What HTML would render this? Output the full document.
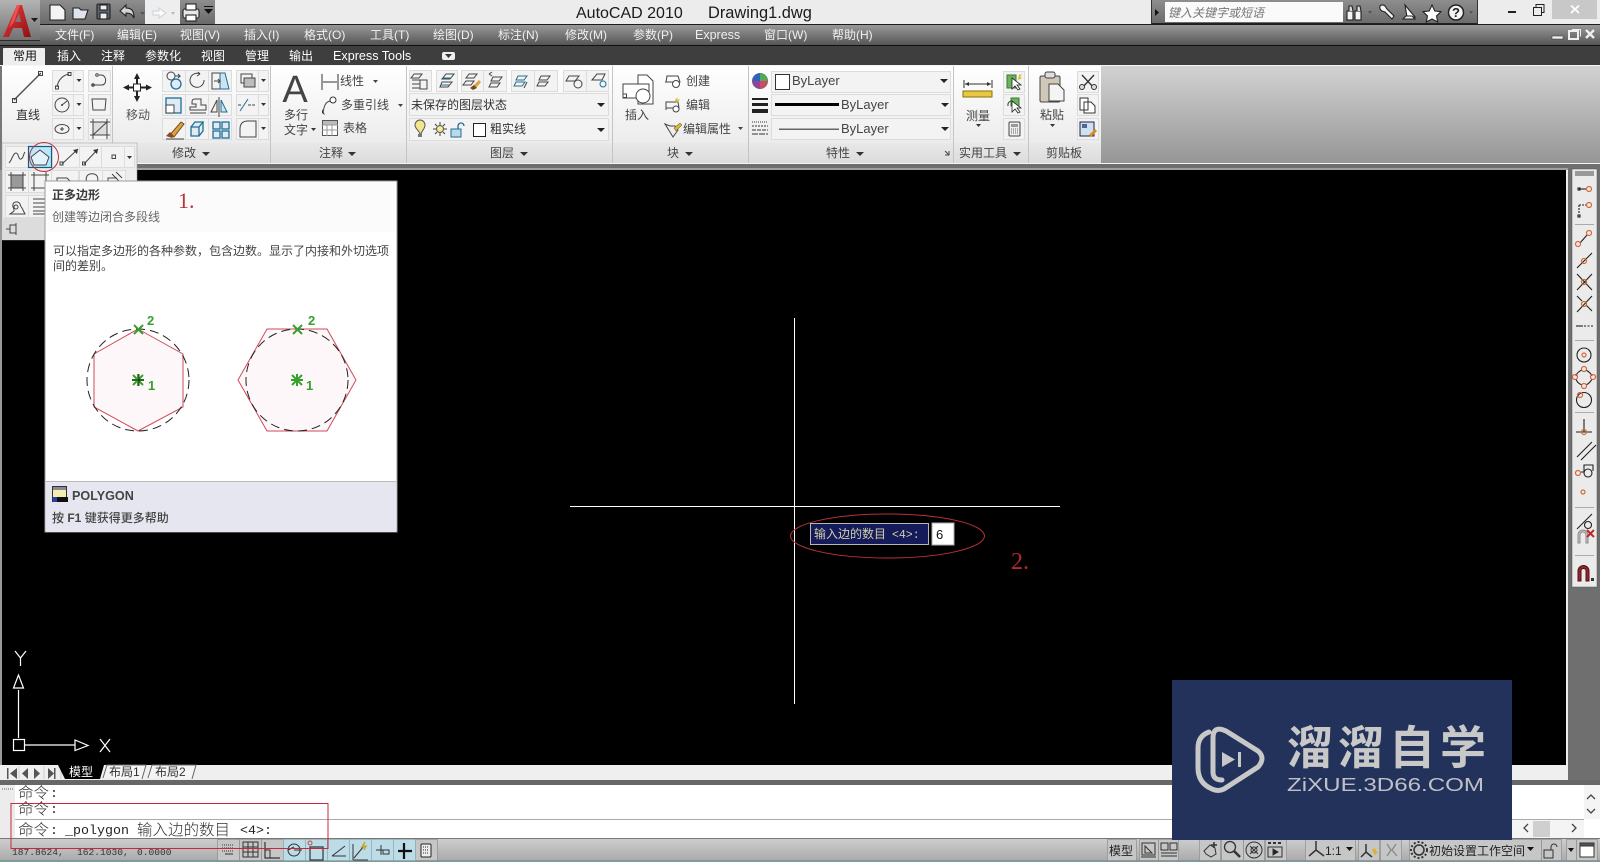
<!DOCTYPE html>
<html><head><meta charset="utf-8"><title>AutoCAD 2010</title>
<style>
html,body{margin:0;padding:0;width:1600px;height:862px;overflow:hidden;background:#000}
svg{display:block;position:absolute;left:0;top:0}
text{font-family:"Liberation Sans","Noto Sans CJK SC",sans-serif;font-size:12px;fill:#333}
.m{fill:#f0f0f0;font-size:12px}
.t{fill:#fff;font-size:12px}
.c{text-anchor:middle}
.b{fill:#f3f3f3;stroke:#dcdcdc;stroke-width:1}
.i{fill:none;stroke:#444;stroke-width:1.2}
.o{fill:none;stroke:#444;stroke-width:1}
.blue{fill:#dfeaf3;stroke:#1c6f97;stroke-width:1.3}
.cm{font-family:"Noto Sans CJK SC",sans-serif;font-size:15.5px;fill:#333;font-weight:300}
.cl{font-family:"Liberation Mono",monospace;font-size:13.3px;fill:#222}
.sb{fill:#bcdce8;stroke:#8aa;stroke-width:.6}
.sn{fill:#c6c6c6;stroke:#888;stroke-width:.6}
.snap{fill:none;stroke:#222;stroke-width:1.1}
.r{fill:none;stroke:#d2693a;stroke-width:1.2}
.red{fill:none;stroke:#b8323a;stroke-width:1}
</style></head><body>
<svg width="1600" height="862" viewBox="0 0 1600 862" xmlns="http://www.w3.org/2000/svg">
<defs>
<linearGradient id="gm" x1="0" y1="0" x2="0" y2="1"><stop offset="0" stop-color="#9c9c9c"/><stop offset="1" stop-color="#525252"/></linearGradient>
<linearGradient id="gq" x1="0" y1="0" x2="0" y2="1"><stop offset="0" stop-color="#8e8e8e"/><stop offset="1" stop-color="#6a6a6a"/></linearGradient>
<linearGradient id="gr" x1="0" y1="0" x2="0" y2="1"><stop offset="0" stop-color="#ffffff"/><stop offset="1" stop-color="#ececec"/></linearGradient>
<linearGradient id="gt" x1="0" y1="0" x2="0" y2="1"><stop offset="0" stop-color="#e8e8e8"/><stop offset="1" stop-color="#dcdcdc"/></linearGradient>
<linearGradient id="ge" x1="0" y1="0" x2="0" y2="1"><stop offset="0" stop-color="#d2d2d2"/><stop offset="1" stop-color="#969696"/></linearGradient>
<linearGradient id="gs" x1="0" y1="0" x2="0" y2="1"><stop offset="0" stop-color="#cfcfcf"/><stop offset="1" stop-color="#a8a8a8"/></linearGradient>
<linearGradient id="ga" x1="0" y1="0" x2="0" y2="1"><stop offset="0" stop-color="#b4b4b4"/><stop offset="1" stop-color="#707070"/></linearGradient>
<linearGradient id="gl" x1="0" y1="0" x2="1" y2="1"><stop offset="0" stop-color="#e84040"/><stop offset="1" stop-color="#8e1014"/></linearGradient>
</defs>

<!-- title bar -->
<rect width="1600" height="24" fill="#ececec"/>
<rect x="0" y="24" width="1600" height="22" fill="url(#gm)"/>
<rect x="0" y="24" width="1600" height="1" fill="#1c1c1c"/>
<rect x="0" y="45" width="1600" height="1" fill="#111"/>
<rect x="0" y="46" width="1600" height="19" fill="#3e3e3e"/>

<!-- QAT -->
<rect x="40" y="0" width="175" height="24" fill="url(#gq)"/>
<rect x="145" y="0" width="35" height="24" fill="#eeeeee"/>
<g stroke="#222" stroke-width="1.1">
<path d="M50 5h10l5 5v10H50z" fill="#f4f4f4"/>
<path d="M73 8h6l2 2h7l-3 9H73z" fill="#dfe5ea"/>
<rect x="97" y="4" width="13" height="15" rx="1" fill="#5c6670"/><rect x="100" y="5" width="7" height="5" fill="#eee"/><rect x="100" y="13" width="7" height="6" fill="#eee"/>
<path d="M120 11l6-6v3c6 0 8 3 8 10-2-4-4-5-8-5v3z" fill="#d4d4d4"/>
</g>
<path d="M153 11l6 0v-3l7 5-7 5v-3h-6z" fill="#fafafa" stroke="#c8d2dc" stroke-width="1"/>
<g stroke="#222" stroke-width="1.1" fill="#e8e8e8">
<rect x="183" y="9" width="16" height="9" rx="2"/><rect x="186" y="4" width="10" height="6" fill="#fff"/><rect x="186" y="15" width="10" height="6" fill="#fff"/>
</g>
<path d="M204 9h9l-4.500 5z M204 6h9v1h-9z" fill="#111"/>
<path d="M140 12h5l-2.500 3z" fill="#555"/><path d="M171 12h4l-2 3z" fill="#bbb"/>

<!-- App button -->
<rect x="0" y="0" width="40" height="41" fill="url(#ga)"/>
<rect x="0" y="40" width="40" height="1" fill="#2a2a2a"/>
<path d="M3 37L17 5h5l9 32h-7l-2-9h-9l-4 9z" fill="url(#gl)"/>
<path d="M15 22h6l-2-9z" fill="#8a7070"/>
<path d="M17 5h3l-6 17-5 6z" fill="#f05050"/>
<path d="M31 18h7l-3.500 4z" fill="#1a1a1a"/>

<!-- Title -->
<text x="576" y="18" style="font-size:16px;fill:#1b1b1b">AutoCAD 2010</text>
<text x="708" y="18" style="font-size:16.4px;fill:#1b1b1b">Drawing1.dwg</text>

<!-- Search -->
<rect x="1151" y="0" width="327" height="24" fill="url(#gq)"/>
<rect x="1151" y="23" width="327" height="1" fill="#222"/>
<rect x="1151" y="0" width="1" height="24" fill="#333"/>
<rect x="1477" y="0" width="1" height="24" fill="#333"/>
<rect x="1165" y="2" width="178" height="20" fill="#fafafa"/>
<path d="M1155 9l4 3.500-4 3.500z" fill="#111"/>
<text x="1168" y="17" style="font-size:12px;font-style:italic;fill:#777">键入关键字或短语</text>
<g stroke="#222" stroke-width="1.1" fill="#f4f4f4">
<rect x="1347" y="11" width="6" height="9"/><rect x="1355" y="11" width="6" height="9"/><path d="M1349 11v-5h3l1 5M1357 11v-5h3l1 5" fill="#ddd"/>
<path d="M1380 6a3.500 3.500 0 0 1 5 0l2 3 7 7-2 3-7-7-3-1a4 4 0 0 1-2-5z"/>
<path d="M1405 5l10 12h-8z" fill="#fff"/><path d="M1403 19h12l-3-3h-6z"/>
<path d="M1432 5l2.800 6 6.200.7-4.500 4.300 1.200 6-5.700-3-5.700 3 1.200-6-4.500-4.300 6.200-.7z" fill="#fff"/>
<circle cx="1456" cy="12.500" r="7.500" stroke-width="1.500"/>
</g>
<text x="1456" y="17" class="c" style="font-size:13px;font-weight:bold;fill:#222">?</text>
<path d="M1368 11h4l-2 3zM1469 11h4l-2 3z" fill="#555"/>

<!-- window controls -->
<rect x="1508" y="11" width="8" height="2" fill="#222"/>
<path d="M1533.500 7.500h8v8h-8zM1536 7v-2.500h8v8h-2.500" fill="none" stroke="#222" stroke-width="1"/>
<rect x="1552" y="0" width="45" height="19" fill="#c8c8c8"/>
<path d="M1571 5.500l8 7.500M1579 5.500l-8 7.500" stroke="#fff" stroke-width="1.800"/>
<!-- menu right -->
<rect x="1552" y="36" width="11" height="3" fill="#eee" stroke="#333" stroke-width=".5"/>
<rect x="1569" y="31" width="9" height="8" fill="none" stroke="#eee" stroke-width="2"/>
<path d="M1572 29.500h8.500v7" fill="none" stroke="#eee" stroke-width="1"/>
<path d="M1586 30l8 8M1594 30l-8 8" stroke="#eee" stroke-width="2.400"/>

<!-- Menu -->
<text x="55" y="39" class="m">文件(F)</text>
<text x="117" y="39" class="m">编辑(E)</text>
<text x="180" y="39" class="m">视图(V)</text>
<text x="244" y="39" class="m">插入(I)</text>
<text x="304" y="39" class="m">格式(O)</text>
<text x="370" y="39" class="m">工具(T)</text>
<text x="433" y="39" class="m">绘图(D)</text>
<text x="498" y="39" class="m">标注(N)</text>
<text x="565" y="39" class="m">修改(M)</text>
<text x="633" y="39" class="m">参数(P)</text>
<text x="695" y="39" class="m" style="font-size:12.5px">Express</text>
<text x="764" y="39" class="m">窗口(W)</text>
<text x="832" y="39" class="m">帮助(H)</text>

<!-- Tabs -->
<path d="M3 65V49q0-1 1-1h40q1 0 1 1v16z" fill="#eeeeee"/>
<text x="13" y="60" style="font-size:12px;fill:#111">常用</text>
<text x="57" y="60" class="t">插入</text>
<text x="101" y="60" class="t">注释</text>
<text x="145" y="60" class="t">参数化</text>
<text x="201" y="60" class="t">视图</text>
<text x="245" y="60" class="t">管理</text>
<text x="289" y="60" class="t">输出</text>
<text x="333" y="60" class="t" style="font-size:12.6px">Express Tools</text>
<rect x="442" y="52" width="13" height="8" rx="2" fill="#eee"/><path d="M445 54h7l-3.500 4z" fill="#333"/>

<!-- Ribbon -->
<rect x="0" y="65" width="1600" height="1" fill="#f5f5f5"/>
<rect x="1101" y="66" width="499" height="97" fill="url(#ge)"/>
<rect x="2" y="66" width="1099" height="77" fill="url(#gr)"/>
<rect x="2" y="143" width="1099" height="20" fill="url(#gt)"/>
<rect x="0" y="163" width="1600" height="1" fill="#f4f4f4"/>
<rect x="0" y="164" width="1600" height="6" fill="#6e6e6e"/>
<rect x="0" y="168" width="1600" height="2" fill="#a0a0a0"/>
<rect x="0" y="66" width="2" height="104" fill="#777"/>
<g fill="#c4c4c4">
<rect x="112" y="66" width="1" height="77"/><rect x="270" y="66" width="1" height="97"/><rect x="406" y="66" width="1" height="97"/>
<rect x="612" y="66" width="1" height="97"/><rect x="748" y="66" width="1" height="97"/><rect x="953" y="66" width="1" height="97"/><rect x="1028" y="66" width="1" height="97"/>
</g>

<!-- Panel titles -->
<g style="font-size:12px">
<text x="172" y="157" style="fill:#444">修改</text><path d="M202 152h8l-4 4z" fill="#333"/>
<text x="319" y="157" style="fill:#444">注释</text><path d="M348 152h8l-4 4z" fill="#333"/>
<text x="490" y="157" style="fill:#444">图层</text><path d="M520 152h8l-4 4z" fill="#333"/>
<text x="667" y="157" style="fill:#444">块</text><path d="M685 152h8l-4 4z" fill="#333"/>
<text x="826" y="157" style="fill:#444">特性</text><path d="M856 152h8l-4 4z" fill="#333"/>
<text x="959" y="157" style="fill:#444">实用工具</text><path d="M1013 152h8l-4 4z" fill="#333"/>
<text x="1046" y="157" style="fill:#444">剪贴板</text>
<path d="M945 151l4 4M949 151v4h-4" stroke="#444" fill="none"/>
</g>

<!-- draw panel -->
<path d="M14 100L41 73" stroke="#555" stroke-width="1.500"/>
<rect x="12.500" y="98.500" width="4" height="4" class="o"/><rect x="38.500" y="71.500" width="4" height="4" class="o"/>
<text x="28" y="119" class="c" style="font-size:12px;fill:#333">直线</text>
<g class="b">
<rect x="52.500" y="70.500" width="21" height="21"/><rect x="73.500" y="70.500" width="10" height="21"/>
<rect x="52.500" y="94.500" width="21" height="21"/><rect x="73.500" y="94.500" width="10" height="21"/>
<rect x="52.500" y="118.500" width="21" height="21"/><rect x="73.500" y="118.500" width="10" height="21"/>
<rect x="88.500" y="70.500" width="22" height="21"/><rect x="88.500" y="94.500" width="22" height="21"/><rect x="88.500" y="118.500" width="22" height="21"/>
</g>
<path d="M76.500 79h5l-2.500 3zM76.500 103h5l-2.500 3zM76.500 127h5l-2.500 3z" fill="#333"/>
<path d="M57 87c1-7 6-12 12-13" class="o"/><rect x="55.500" y="86" width="3" height="3" class="o"/><rect x="68" y="72.500" width="3" height="3" class="o"/>
<circle cx="62" cy="105" r="7" class="o"/><path d="M62 105l5-4" class="o"/><circle cx="62" cy="105" r="1" fill="#444"/>
<ellipse cx="62" cy="129" rx="7" ry="4.500" class="o"/><path d="M60 129h4M62 127v4" class="o"/>
<path d="M92 85h10c5 0 5-10-1-10h-2" class="o"/><circle cx="93" cy="85" r="1.300" class="o"/><circle cx="97" cy="75" r="1.300" class="o"/>
<path d="M92 99h14l-1 11H93z" class="o"/>
<rect x="93" y="122" width="14" height="13" fill="#ddd" stroke="#444"/><path d="M93 119v20M107 119v20M90 122h20M90 135h20M93 135l14-13" class="o"/>

<!-- move -->
<g fill="#222">
<path d="M137 73l3 6h-6zM137 102l3-6h-6zM123 87.500l6-3v6zM152 87.500l-6-3v6z"/>
<rect x="136" y="78" width="2" height="6"/><rect x="136" y="91" width="2" height="6"/><rect x="128" y="86.500" width="6" height="2"/><rect x="140" y="86.500" width="6" height="2"/>
</g><rect x="133.500" y="84" width="7" height="7" fill="#fff" stroke="#222"/>
<text x="138" y="119" class="c" style="font-size:12px;fill:#555">移动</text>

<!-- modify grid -->
<g class="b">
<rect x="162.500" y="70.500" width="23" height="21"/><rect x="185.500" y="70.500" width="23" height="21"/><rect x="208.500" y="70.500" width="23" height="21"/>
<rect x="162.500" y="94.500" width="23" height="21"/><rect x="185.500" y="94.500" width="23" height="21"/><rect x="208.500" y="94.500" width="23" height="21"/>
<rect x="162.500" y="118.500" width="23" height="21"/><rect x="185.500" y="118.500" width="23" height="21"/><rect x="208.500" y="118.500" width="23" height="21"/>
<rect x="236.500" y="70.500" width="22" height="21"/><rect x="258.500" y="70.500" width="10" height="21"/>
<rect x="236.500" y="94.500" width="22" height="21"/><rect x="258.500" y="94.500" width="10" height="21"/>
<rect x="236.500" y="118.500" width="22" height="21"/><rect x="258.500" y="118.500" width="10" height="21"/>
</g>
<path d="M261 79h5l-2.500 3zM261 103h5l-2.500 3zM261 127h5l-2.500 3z" fill="#333"/>
<circle cx="171" cy="76" r="4" class="o"/><circle cx="176" cy="84" r="5" class="blue"/><path d="M175 76h5l-2-2m2 2l-2 2" class="o"/>
<path d="M204 80a7 7 0 1 1-4-6l-2-2m2 2l-3 2" class="o"/>
<rect x="212" y="73" width="11" height="16" class="o"/><path d="M220 73h5l4 16h-9z" fill="#cfe2ef" stroke="#1c6f97"/><path d="M214 81h6l-2-2m2 2l-2 2" class="o"/>
<rect x="166" y="98" width="15" height="15" class="blue"/><rect x="166" y="105" width="8" height="8" fill="#fff" stroke="#444"/>
<path d="M190 110h16v-5h-5v-6h-6q-3 0-3 3v2h4v3h-6z" class="o"/><path d="M190 113h16" class="o"/>
<path d="M219 97v20" class="o"/><path d="M217 100v12h-6z" class="o"/><path d="M221 100v12h6z" fill="#cfe2ef" stroke="#1c6f97"/>
<path d="M169 136l12-14 3 2-10 13z" fill="#d9a441" stroke="#7a4a1a"/><path d="M166 136l4-4 4 4-2 2z" fill="#8b4a22"/><path d="M166 139h18" class="o"/>
<path d="M191 127h8v9h-8zM199 127l4-5h-8l-4 5M199 136l4-5v-9" class="blue"/>
<g class="blue"><rect x="213" y="122" width="7" height="7"/><rect x="222" y="122" width="7" height="7"/><rect x="213" y="131" width="7" height="7"/><rect x="222" y="131" width="7" height="7"/></g>
<rect x="241" y="74" width="11" height="9" class="o"/><rect x="244" y="78" width="11" height="9" fill="#bcbcbc" stroke="#444"/>
<path d="M240 111l8-12" stroke="#1c6f97" fill="none"/><path d="M238 105h4M248 105h8" class="o" stroke-dasharray="3 1"/>
<path d="M240 137v-8q0-8 8-8h8v16z" class="o"/>

<!-- annot -->
<text x="295" y="102" class="c" style="font-size:38px;fill:#444">A</text>
<text x="296" y="119" class="c" style="font-size:12px;fill:#444">多行</text>
<text x="296" y="134" class="c" style="font-size:12px;fill:#444">文字</text>
<path d="M311 128h5l-2.500 3z" fill="#333"/>
<path d="M322 74v16M338 74v16M323 82h14" stroke="#333" fill="none"/>
<text x="340" y="85" style="font-size:12px;fill:#444">线性</text><path d="M373 80h5l-2.500 3z" fill="#444"/>
<path d="M323 113c1-8 3-11 7-12" class="o"/><path d="M322 113l3 2-3-6z" fill="#333"/><circle cx="333" cy="100" r="3" fill="#fff" stroke="#333"/>
<text x="341" y="109" style="font-size:12px;fill:#444">多重引线</text><path d="M398 104h5l-2.500 3z" fill="#444"/>
<rect x="322.500" y="120.500" width="15" height="15" fill="#fff" stroke="#555"/><path d="M322 125h16M322 130h16M327 121v15M332 121v15" stroke="#999" fill="none"/><rect x="323" y="121" width="14" height="3.500" fill="#bbb"/>
<text x="343" y="132" style="font-size:12px;fill:#444">表格</text>

<!-- layers -->
<g class="b">
<rect x="409.500" y="70.500" width="22" height="21"/><rect x="436.500" y="70.500" width="21" height="21"/><rect x="461.500" y="70.500" width="22" height="21"/><rect x="483.500" y="70.500" width="23" height="21"/>
<rect x="511.500" y="70.500" width="23" height="21"/><rect x="534.500" y="70.500" width="23" height="21"/><rect x="563.500" y="70.500" width="23" height="21"/><rect x="586.500" y="70.500" width="22" height="21"/>
<rect x="409.500" y="93.500" width="199" height="22"/><rect x="409.500" y="118.500" width="199" height="22"/>
</g>
<g class="o">
<path d="M414 74h8l-3 4h-8zM412 80h8M412 84h8M412 88h8"/><rect x="420" y="80" width="7" height="9"/>
<path d="M446 74h8l-4 5h-8zM442 82l10 0-4 5h-8z"/><path d="M443 78l8 0M441 85l8 0" stroke="#1c6f97"/>
<path d="M469 74h8l-3 4h-8zM466 81h8l-3 4h-8z"/>
<path d="M493 77h9l-3 4h-8zM491 83h9l-3 4h-8zM489 74l3-2m-3 2l3 2"/>
<path d="M518 76h9l-3 4h-8zM516 82h9l-3 4h-8z" stroke="#2a6f90"/><path d="M527 82l-3 6M541 76h9l-3 4h-8zM539 82h9l-3 4h-8z"/>
<path d="M569 76h10l-4 5h-9z"/><circle cx="578" cy="84" r="4"/><path d="M592 80l5-6h8l-3 6h-10z"/><circle cx="603" cy="84" r="3" stroke="#1c6f97"/>
</g>
<path d="M473 86l6-6 2 2-5 6z" fill="#d9a441"/><path d="M470 88l4-3 3 3-4 2z" fill="#7a4a1a"/>
<text x="411" y="109" style="font-size:12px;fill:#333">未保存的图层状态</text>
<path d="M597 103h8l-4 4zM597 128h8l-4 4z" fill="#222"/>
<path d="M420 134c-1-4-5-5-5-9a5 5 0 0 1 10 0c0 4-3 5-4 9z" fill="#f3e48e" stroke="#555"/><rect x="418" y="134" width="4" height="3" fill="#777"/>
<circle cx="440" cy="129" r="3.500" fill="#f4e98e" stroke="#555"/><path d="M440 122v3M440 133v3M433 129h3M444 129h3M435 124l2 2M443 132l2 2M445 124l-2 2M437 132l-2 2" class="o"/>
<rect x="451" y="129" width="10" height="8" fill="#bcd9ea" stroke="#1c6f97"/><path d="M458 129v-3a3 3 0 0 1 6 0" fill="none" stroke="#1c6f97" stroke-width="1.300"/>
<rect x="473.500" y="123.500" width="12" height="13" fill="#fff" stroke="#222"/>
<text x="490" y="133" style="font-size:12px;fill:#333">粗实线</text>

<!-- block -->
<g class="o" stroke="#555">
<path d="M638 75h9l6 6v23h-15z" fill="#fff"/><rect x="623" y="84" width="26" height="14" fill="#fff"/><circle cx="643" cy="96" r="7" fill="#fff"/><rect x="623" y="94" width="3.500" height="3.500" fill="#fff"/>
<path d="M667 76h11l2 6h-14z M665 82h15"/><circle cx="676" cy="84" r="3.500" fill="#fff"/>
<path d="M666 102h12l1 6h-13zM666 108v2"/><circle cx="676" cy="109" r="3" fill="#fff"/>
<path d="M665 124l5 2 5 0 3 4-5 7z"/>
</g>
<path d="M675 100l3-3-1 3 3-1-3 4z" fill="#d9b820"/><path d="M674 128l6-5 2 2-6 6z" fill="#d9b820" stroke="#444" stroke-width=".5"/>
<text x="637" y="119" class="c" style="font-size:12px;fill:#444">插入</text>
<text x="686" y="85" style="font-size:12px;fill:#444">创建</text>
<text x="686" y="109" style="font-size:12px;fill:#444">编辑</text>
<text x="683" y="133" style="font-size:12px;fill:#444">编辑属性</text>
<path d="M738 127h5l-2.500 3z" fill="#444"/>

<!-- properties -->
<circle cx="760" cy="81" r="7.500" fill="#e0a030" stroke="#666"/>
<path d="M760 81V73.500a7.500 7.500 0 0 1 7.500 7.500z" fill="#4caf50"/><path d="M760 81h7.500a7.500 7.500 0 0 1-7.500 7.500z" fill="#d04a60"/><path d="M760 81v7.500a7.500 7.500 0 0 1-7.500-7.500z" fill="#9040a0"/><path d="M760 81h-7.500a7.500 7.500 0 0 1 7.500-7.500z" fill="#3060c0"/>
<g fill="#222"><rect x="752" y="98" width="16" height="2"/><rect x="752" y="103" width="16" height="3"/><rect x="752" y="109" width="16" height="4"/></g>
<g stroke="#333" fill="none" stroke-width="1"><path d="M752 122h16" stroke-dasharray="1 1"/><path d="M752 126h16" stroke-dasharray="2 1"/><path d="M752 130h16" stroke-dasharray="4 1"/><path d="M752 134h16" stroke-dasharray="6 1"/></g>
<g class="b">
<rect x="771.500" y="71.500" width="179" height="21"/><rect x="771.500" y="94.500" width="179" height="21"/><rect x="771.500" y="118.500" width="179" height="21"/>
</g>
<rect x="775.500" y="74.500" width="14" height="15" fill="#fff" stroke="#333"/>
<text x="792" y="85" style="font-size:13px;fill:#444">ByLayer</text>
<rect x="775" y="103" width="64" height="3" fill="#000"/>
<text x="841" y="109" style="font-size:13px;fill:#444">ByLayer</text>
<rect x="779" y="128.500" width="60" height="1.500" fill="#666"/>
<text x="841" y="133" style="font-size:13px;fill:#444">ByLayer</text>
<path d="M940 79h8l-4 4zM941 103h8l-4 4zM941 127h8l-4 4z" fill="#222"/>

<!-- utils -->
<path d="M964 80v8M992 80v8M965 84h26" stroke="#333" fill="none"/><path d="M965 84l4-2v4zM991 84l-4-2v4z" fill="#333"/>
<rect x="963" y="91" width="29" height="6" fill="#e8c840" stroke="#8a7010"/>
<text x="978" y="120" class="c" style="font-size:12px;fill:#444">测量</text>
<path d="M976 124h5l-2.500 3z" fill="#333"/>
<g class="b"><rect x="1003.500" y="71.500" width="21" height="21"/><rect x="1003.500" y="94.500" width="21" height="21"/><rect x="1003.500" y="118.500" width="21" height="21"/></g>
<rect x="1007" y="75" width="9" height="13" fill="#6eb260" stroke="#3a7a30"/><path d="M1012 78v11l3-3 3 4 2-1-3-4h4z" fill="#fff" stroke="#222" stroke-width=".8"/><path d="M1019 75l3-1-2 3 2 1-4 2z" fill="#d9b820"/>
<path d="M1008 106a4 4 0 0 1 4-5" class="o"/><path d="M1011 98h8v8h-8z" fill="#6eb260" stroke="#3a7a30"/><path d="M1012 101v11l3-3 3 4 2-1-3-4h4z" fill="#fff" stroke="#222" stroke-width=".8"/>
<rect x="1009" y="122" width="11" height="14" rx="1" fill="#eee" stroke="#444"/><rect x="1011" y="124" width="7" height="3" fill="#999"/><path d="M1011 129h7M1011 131h7M1011 133h7" stroke="#666" stroke-dasharray="1 1"/>

<!-- clipboard -->
<rect x="1040" y="76" width="20" height="26" rx="1.500" fill="#cfc7b8" stroke="#444"/><rect x="1045" y="72" width="10" height="6" rx="2" fill="#ddd" stroke="#444"/>
<path d="M1049 84h9l6 6v11h-15z" fill="#f4f4f4" stroke="#444"/>
<text x="1052" y="119" class="c" style="font-size:12px;fill:#444">粘贴</text>
<path d="M1050 124h5l-2.500 3z" fill="#333"/>
<g class="b"><rect x="1077.500" y="71.500" width="21" height="21"/><rect x="1077.500" y="94.500" width="21" height="21"/><rect x="1077.500" y="118.500" width="21" height="21"/></g>
<path d="M1082 75l12 13M1094 75l-12 13" stroke="#333" stroke-width="1.300" fill="none"/><circle cx="1082" cy="87" r="2.500" fill="#ddd" stroke="#333"/><circle cx="1094" cy="87" r="2.500" fill="#ddd" stroke="#333"/>
<path d="M1080 98h8v12h-8z M1084 102h7l4 4v7h-11z" fill="#fff" stroke="#333"/>
<rect x="1080" y="122" width="14" height="14" fill="#cfe0ee" stroke="#224"/><rect x="1082" y="124" width="5" height="4" fill="#4a6a90"/><path d="M1089 135l6-6 2 2-6 6z" fill="#d98a20"/>

<!-- canvas -->
<rect x="2" y="170" width="1564" height="595" fill="#000"/>
<rect x="0" y="170" width="2" height="595" fill="#9a9a9a"/>
<rect x="1566" y="170" width="2" height="600" fill="#eeeeee"/>
<rect x="1568" y="164" width="32" height="621" fill="#6f6f6f"/>

<!-- right toolbar -->
<rect x="1572" y="169" width="25" height="418" fill="#ebebeb" stroke="#555" stroke-width=".5"/>
<rect x="1575" y="171" width="19" height="5" fill="#999"/>
<g stroke="#aaa"><path d="M1575 224.500h19M1575 340.500h19M1575 412.500h19M1575 507.500h19M1575 555.500h19"/></g>
<g class="snap">
<path d="M1579 189h8"/><rect x="1578" y="188" width="2" height="2"/>
<path d="M1579 205h8v0M1579 205v9" stroke-dasharray="2 1"/><rect x="1578" y="215" width="2" height="2"/>
<path d="M1580 243l7-8"/>
<path d="M1577 268l15-15"/>
<path d="M1577 274l15 16M1577 290l15-16"/>
<path d="M1577 296l5 5m4 4l6 6M1577 312l15-16" />
<path d="M1576 326h7"/><path d="M1584 326h10" stroke-dasharray="2 1.500"/>
<circle cx="1584" cy="355" r="7"/>
<path d="M1586 370q5 3 6 6M1592 379q-2 4-6 6M1582 385q-5-2-6-6M1576 376q1-4 6-6"/><circle cx="1584" cy="400" r="7.500"/>
<path d="M1584 419v13M1576 432h16"/>
<path d="M1577 457l15-15M1581 460l15-15"/>
<path d="M1581 472h3v-7h9v6"/><circle cx="1588" cy="473" r="4"/>
<path d="M1577 529l15-15"/><circle cx="1588" cy="525" r="3.500" fill="#ebebeb"/>
</g>
<g class="r">
<circle cx="1589" cy="189" r="2.500"/><circle cx="1589" cy="205" r="2.500"/>
<circle cx="1578" cy="244" r="2.500"/><circle cx="1589" cy="233" r="2.500"/>
<circle cx="1584" cy="261" r="2.500"/><circle cx="1584" cy="282" r="2.500"/><circle cx="1584" cy="304" r="2.500"/>
<circle cx="1584" cy="355" r="2"/><circle cx="1584" cy="369" r="2.500"/><circle cx="1593" cy="377" r="2.500"/><circle cx="1584" cy="386" r="2.500"/><circle cx="1575" cy="377" r="2.500"/>
<circle cx="1580" cy="395" r="2.500"/><circle cx="1584" cy="432" r="2.500"/><circle cx="1578" cy="473" r="2.500"/><circle cx="1583" cy="492" r="2"/>
</g>
<path d="M1578 543v-8a5 5 0 0 1 10 0v8h-2v-8a3 3 0 0 0-6 0v8z" fill="#ccc" stroke="#888"/><path d="M1587 530l7 7M1594 530l-7 7" stroke="#c0282a" stroke-width="2"/>
<path d="M1578 581v-10a5 5 0 0 1 11 0v10h-3v-10a2.500 2.500 0 0 0-5 0v10z" fill="#8a2a2a" stroke="#511"/><rect x="1591" y="578" width="3" height="3" fill="#333"/>

<!-- crosshair -->
<rect x="794" y="318" width="1" height="386" fill="#fff"/>
<rect x="570" y="506" width="490" height="1" fill="#fff"/>
<ellipse cx="887.500" cy="536" rx="97" ry="22" class="red"/>
<rect x="810.500" y="523.500" width="118" height="21" fill="#141a5a" stroke="#b8b8b0"/>
<text x="814" y="538" style="font-size:12px;fill:#cfcfa8">输入边的数目</text>
<text x="892" y="538" style="font-family:'Liberation Mono',monospace;font-size:11.500px;fill:#cfcfa8">&lt;4&gt;:</text>
<rect x="932" y="523" width="22" height="22" fill="#fff" stroke="#aaa"/>
<text x="936" y="539" style="font-size:13px;fill:#111">6</text>
<text x="1011" y="569" style="font-family:'Liberation Serif',serif;font-size:24px;fill:#b02a30">2.</text>

<!-- UCS -->
<g stroke="#fff" fill="none" stroke-width="1.200">
<path d="M18.500 738V690"/><path d="M18.500 675l-5 13h10z"/><path d="M25 745h50"/><path d="M75 740l13 5.500-13 5z"/>
<rect x="13.500" y="739.500" width="11" height="11"/>
<path d="M15 651l5.500 7 5.500-7M20.500 658v8"/><path d="M100 739l10 13M110 739l-10 13"/>
</g>

<!-- expanded draw panel -->
<rect x="2" y="143" width="135" height="97" fill="#ececec" stroke="#999" stroke-width=".5"/>
<g class="b">
<rect x="5.500" y="146.500" width="23" height="21"/>
<rect x="52.500" y="146.500" width="27" height="21"/><rect x="79.500" y="146.500" width="22" height="21"/><rect x="101.500" y="146.500" width="23" height="21"/><rect x="124.500" y="146.500" width="10" height="21"/>
<rect x="5.500" y="170.500" width="23" height="22"/><rect x="28.500" y="170.500" width="23" height="22"/><rect x="51.500" y="170.500" width="27" height="22"/><rect x="79.500" y="170.500" width="23" height="22"/><rect x="102.500" y="170.500" width="23" height="22"/>
<rect x="5.500" y="195.500" width="23" height="22"/><rect x="28.500" y="195.500" width="23" height="22"/>
</g>
<rect x="28.500" y="146.500" width="23" height="21" fill="#bfe6f7" stroke="#0b5f8a" stroke-width="1.200"/>
<path d="M40 150l9 7-3 8h-12l-3-8z" fill="#e3f2fa" stroke="#444"/>
<path d="M9 163c3-3 4-10 7-10s2 7 5 6 2-5 4-7" class="o"/>
<path d="M62 164l16-15" class="o"/><rect x="60" y="162" width="3" height="3" class="o"/><path d="M78 149l-5 1 4 4z" fill="#333"/>
<path d="M84 164l14-15" class="o"/><rect x="82.500" y="162" width="3" height="3" class="o"/><path d="M98 149l-5 1 4 4z" fill="#333"/>
<rect x="112" y="155" width="3.500" height="3.500" class="o"/>
<path d="M127 156h5l-2.500 3z" fill="#333"/>
<rect x="11" y="175" width="12" height="13" fill="#999" stroke="#333"/><path d="M11 172v19M23 172v19M8 175h18M8 188h18" class="o"/>
<path d="M34 175h12v13H34zM34 172v19M46 172v19M31 175h18M31 188h18" class="o"/>
<path d="M57 178h10l5 5v7H57z" class="o"/><path d="M87 176c2-3 8-3 10 0s0 10-5 10-7-6-5-10z" class="o"/>
<path d="M108 188v-10h9M112 174l8 8M116 172l6 6" class="o"/>
<path d="M10 214h15l-2-4c-1-3-2-2-3-6a4 4 0 0 0-7 0c-1 4 2 5 1 7z" class="o"/><circle cx="16" cy="207" r="2" class="o"/>
<path d="M33 199h14M33 203h14M33 207h14M33 211h14M33 214h14" class="o" stroke-width="1.500"/>
<rect x="2" y="218" width="135" height="22" fill="#dcdcdc"/>
<path d="M6 229h4M10 225h6v8h-6zM16 223v12" class="o"/>
<circle cx="44" cy="157" r="14.500" fill="none" stroke="#b8323a" stroke-width="1"/>

<!-- tooltip -->
<rect x="45" y="181" width="352" height="351" fill="#fff" stroke="#999"/>
<rect x="46" y="182" width="350" height="50" fill="#fbfbfb"/>
<rect x="46" y="481" width="350" height="51" fill="#e6e6f0"/>
<rect x="46" y="481" width="350" height="1" fill="#bbb"/>
<text x="52" y="199" style="font-size:12px;font-weight:bold;fill:#3a3a3a">正多边形</text>
<text x="52" y="221" style="font-size:12px;fill:#666">创建等边闭合多段线</text>
<text x="53" y="255" style="font-size:12px;fill:#444">可以指定多边形的各种参数，包含边数。显示了内接和外切选项</text>
<text x="53" y="270" style="font-size:12px;fill:#444">间的差别。</text>
<text x="178" y="208" style="font-family:'Liberation Serif',serif;font-size:22px;fill:#b8323a">1.</text>
<!-- diagrams -->
<polygon points="138,329 183,354 183,407 138,431 94,407 94,354" fill="#fdf7fa" stroke="#d04a58" stroke-width="1"/>
<circle cx="138" cy="380" r="51" fill="none" stroke="#222" stroke-width="1" stroke-dasharray="9 5"/>
<path d="M134 325l9 9M143 325l-9 9M132 380h12M138 374v12M133 375l10 10M143 375l-10 10" stroke="#38a02c" stroke-width="2" fill="none"/>
<path d="M132 380h12M139 374v12" stroke="#111" stroke-width=".8"/>
<text x="147" y="325" style="font-size:13px;font-weight:bold;fill:#38a02c">2</text>
<text x="148" y="390" style="font-size:13px;font-weight:bold;fill:#38a02c">1</text>
<polygon points="238,380 267,329 327,329 356,380 327,431 267,431" fill="#fdf7fa" stroke="#d04a58" stroke-width="1"/>
<circle cx="297" cy="380" r="51" fill="none" stroke="#222" stroke-width="1" stroke-dasharray="9 5"/>
<path d="M293 325l9 9M302 325l-9 9M291 380h12M297 374v12M292 375l10 10M302 375l-10 10" stroke="#38a02c" stroke-width="2" fill="none"/>
<text x="308" y="325" style="font-size:13px;font-weight:bold;fill:#38a02c">2</text>
<text x="306" y="390" style="font-size:13px;font-weight:bold;fill:#38a02c">1</text>
<!-- footer -->
<rect x="52.500" y="486.500" width="14" height="15" fill="#f4ecb0" stroke="#333"/><rect x="53" y="487" width="13" height="3" fill="#889"/><rect x="53" y="497" width="15" height="5" fill="#111"/><rect x="53" y="497" width="4" height="5" fill="#2244aa"/>
<text x="72" y="500" style="font-size:12.600px;font-weight:bold;fill:#444">POLYGON</text>
<text x="52" y="522" style="font-size:12px;fill:#444;font-weight:500">按 <tspan font-weight="bold">F1</tspan> 键获得更多帮助</text>

<!-- layout tabs -->
<rect x="0" y="765" width="1568" height="15" fill="#efefef"/>
<rect x="0" y="780" width="1600" height="5" fill="#676767"/>
<g fill="#555">
<path d="M17 768l-7 5.500 7 5.500z"/><rect x="7" y="768" width="1.500" height="11"/>
<path d="M28 768l-6 5.500 6 5.500z"/><path d="M34 768l6 5.500-6 5.500z"/><path d="M48 768l6 5.500-6 5.500z"/><rect x="54" y="768" width="1.500" height="11"/>
</g>
<path d="M19 766v13M44 766v13M61 766v13" stroke="#ccc"/>
<path d="M58 765h46l-4 14H65z" fill="#000"/>
<text x="69" y="776" style="font-size:12px;fill:#fff">模型</text>
<path d="M103 778l4-13h39l-4 14" fill="#f5f5f5" stroke="#666"/>
<text x="109" y="776" style="font-size:12px;fill:#333">布局1</text>
<path d="M148 778l4-13h44l-4 14" fill="#f5f5f5" stroke="#666"/>
<text x="155" y="776" style="font-size:12px;fill:#333">布局2</text>

<!-- command window -->
<rect x="0" y="785" width="1600" height="53" fill="#fff"/>
<rect x="0" y="785" width="15" height="53" fill="#ececec"/>
<path d="M2 789h11" stroke="#666" stroke-dasharray="1 1"/>
<rect x="15" y="819" width="1569" height="1" fill="#aaa"/>
<text x="18" y="798" class="cm">命令</text><text x="50" y="797" class="cl">:</text>
<text x="18" y="814" class="cm">命令</text><text x="50" y="813" class="cl">:</text>
<text x="18" y="835" class="cm">命令</text><text x="50" y="834" class="cl">:</text>
<text x="65" y="834" class="cl" style="letter-spacing:.02px">_polygon</text>
<text x="137" y="835" class="cm">输入边的数目</text>
<text x="240" y="834" class="cl">&lt;4&gt;:</text>
<!-- scrollbars -->
<rect x="1584" y="785" width="16" height="34" fill="#f4f4f4"/>
<path d="M1587 799l4-4 4 4M1587 809l4 4 4-4" fill="none" stroke="#444" stroke-width="1.300"/>
<rect x="1512" y="820" width="72" height="18" fill="#f4f4f4"/>
<rect x="1533" y="821" width="17" height="16" fill="#cfcfcf"/>
<path d="M1528 824l-4 4 4 4M1572 824l4 4-4 4" fill="none" stroke="#444" stroke-width="1.300"/>

<!-- status bar -->
<rect x="0" y="838" width="1600" height="24" fill="url(#gs)"/>
<rect x="0" y="838" width="1600" height="1" fill="#777"/>
<rect x="0" y="860" width="1600" height="2" fill="#7f9a9c"/>
<g style="font-family:'Liberation Mono',monospace;font-size:9.6px;fill:#333">
<text x="12" y="855" style="font-family:'Liberation Mono',monospace;font-size:9.600px;fill:#333">187.8624,</text>
<text x="77" y="855" style="font-family:'Liberation Mono',monospace;font-size:9.600px;fill:#333">162.1030,</text>
<text x="137" y="855" style="font-family:'Liberation Mono',monospace;font-size:9.600px;fill:#333">0.0000</text>
</g>
<g class="sn"><rect x="217.500" y="839.500" width="22" height="21"/><rect x="239.500" y="839.500" width="22" height="21"/><rect x="261.500" y="839.500" width="22" height="21"/><rect x="415.500" y="839.500" width="22" height="21"/></g>
<g class="sb"><rect x="283.500" y="839.500" width="22" height="21"/><rect x="305.500" y="839.500" width="22" height="21"/><rect x="327.500" y="839.500" width="22" height="21"/><rect x="349.500" y="839.500" width="22" height="21"/><rect x="371.500" y="839.500" width="22" height="21"/><rect x="393.500" y="839.500" width="22" height="21"/></g>
<g stroke="#333" fill="none">
<path d="M222 845h12M222 848h12M222 851h12" stroke-dasharray="1 1"/><path d="M225 854h8"/>
<path d="M243 842h15v15h-15zM243 847h15M243 852h15M248 842v15M253 842v15" stroke-width="1"/>
<path d="M265 842v16h15" stroke-width="1.200"/><path d="M265 850h5v8"/>
<circle cx="294" cy="850" r="6"/><path d="M294 850h8M288 850l6-3" stroke-width="1"/>
<path d="M310 847h13v13h-13z" stroke-width="1.200"/><circle cx="310" cy="843" r="2" stroke="#c44"/>
<path d="M332 856l13-10M332 856h14"/>
<path d="M353 860v-16M353 860h15M354 858l10-12"/><path d="M365 842l-3 5 4-1-2 4" stroke="#c9a820" stroke-width="1.500"/>
<path d="M376 850h10M381 845v10M383 850h6v4h-6z"/>
<path d="M398 851h14M404 843v16" stroke-width="2.200" stroke="#111"/>
</g>
<rect x="421" y="844" width="10" height="13" rx="1" fill="#eee" stroke="#222"/><path d="M423 847h6M423 850h6M423 853h6" stroke="#222" stroke-dasharray="1 1"/>

<!-- right status -->
<g class="sn"><rect x="1107.500" y="839.500" width="29" height="21"/><rect x="1139.500" y="839.500" width="19" height="21"/><rect x="1158.500" y="839.500" width="20" height="21"/>
<rect x="1199.500" y="839.500" width="21" height="21"/><rect x="1221.500" y="839.500" width="22" height="21"/><rect x="1243.500" y="839.500" width="21" height="21"/><rect x="1265.500" y="839.500" width="21" height="21"/>
<rect x="1305.500" y="839.500" width="50" height="21"/><rect x="1358.500" y="839.500" width="21" height="21"/><rect x="1380.500" y="839.500" width="21" height="21"/>
<rect x="1409.500" y="839.500" width="132" height="21"/><rect x="1541.500" y="839.500" width="20" height="21"/><rect x="1566.500" y="839.500" width="10" height="21"/><rect x="1576.500" y="839.500" width="21" height="21"/></g>
<text x="1109" y="855" style="font-size:12px;fill:#222">模型</text>
<g stroke="#333" fill="none">
<rect x="1142" y="843" width="13" height="12"/><path d="M1141 857h15M1145 846v7h7z"/>
<path d="M1161 843h7v7h-7zM1170 843h7v7h-7zM1161 853h16M1161 856h16"/>
<path d="M1204 851l6-6 5 3 1 6-5 3-5-3z"/><path d="M1214 842v6M1211 845h6" stroke-width="1.500"/>
<circle cx="1230" cy="847" r="5.500" stroke-width="1.300"/><path d="M1234 851l6 6" stroke-width="2.500"/>
<circle cx="1254" cy="850" r="8"/><circle cx="1254" cy="850" r="3"/><path d="M1250 846l8 8M1258 846l-8 8"/>
<rect x="1268" y="847" width="14" height="10"/><path d="M1268 843h3M1273 843h3M1278 843h3" stroke-width="2"/><path d="M1273 849v6l5-3z" fill="#222"/>
<path d="M1316 841v9l-7 6M1316 850l8 6" stroke-width="1.500"/>
<path d="M1366 844v8l-5 5M1366 852l6 5" stroke-width="1.500"/><path d="M1387 844l4 6-4 6M1396 844l-4 6 5 6" stroke="#888" stroke-width="1.300"/>
<circle cx="1419" cy="850" r="5" stroke-width="1.500"/><circle cx="1419" cy="850" r="8" stroke-dasharray="2 2" stroke-width="2"/>
<rect x="1544" y="850" width="9" height="8"/><path d="M1551 850v-3a3 3 0 0 1 6 0"/>
<rect x="1580" y="843" width="14" height="14" fill="#fff"/><rect x="1580" y="843" width="14" height="3" fill="#555"/>
</g>
<path d="M1372 850l3-2 1 3 2 1-3 3z" fill="#e2b020"/>
<text x="1325" y="855" style="font-size:12px;fill:#222">1:1</text>
<path d="M1346 847h7l-3.500 4z" fill="#111"/>
<text x="1429" y="855" style="font-size:12px;fill:#222">初始设置工作空间</text>
<path d="M1527 847h7l-3.500 4zM1568 848h6l-3 4z" fill="#111"/>

<!-- watermark -->
<rect x="1172" y="680" width="340" height="160" fill="#23325a"/>
<path d="M1209 732Q1198 736 1198 748V768Q1198 783 1212 789Q1218 792 1224 789L1258 767Q1266 758 1258 751L1226 731Q1213 725 1213 738V772Q1213 780 1222 780" fill="none" stroke="#c8c8c8" stroke-width="5" stroke-linejoin="round" stroke-linecap="round"/>
<path d="M1222 752l13 7.500-13 7.500z" fill="#c8c8c8"/><rect x="1238" y="752" width="3" height="15" fill="#c8c8c8"/>
<text x="1287" y="764" style="font-family:'Noto Sans CJK SC',sans-serif;font-size:46px;font-weight:bold;fill:#c8c8c8;letter-spacing:5px">溜溜自学</text>
<text x="1287" y="791" textLength="197" lengthAdjust="spacingAndGlyphs" style="font-size:18px;fill:#c0c0c8">ZiXUE.3D66.COM</text>

<!-- red rect -->
<rect x="11" y="803.500" width="317" height="45" fill="none" stroke="#c8283a" stroke-width="1"/>
</svg>
</body></html>
